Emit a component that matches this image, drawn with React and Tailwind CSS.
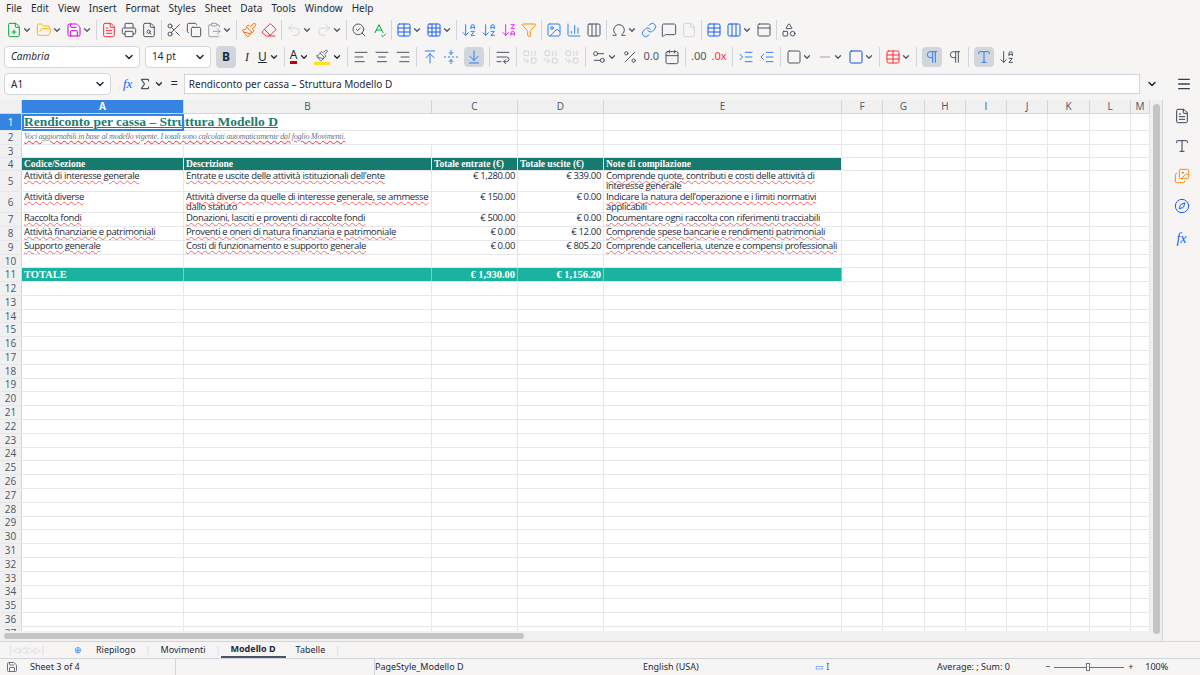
import {
  FilePlus, FolderOpen, Save, FileText, Printer, FileSearch, Scissors, Copy, ClipboardPaste,
  Paintbrush, Eraser, Undo2, Redo2, SearchCheck, SpellCheck, Table, Grid3x3, ArrowDownAZ,
  ArrowDownZA, Filter, Image, BarChart3, Omega, Link, MessageSquare, File, Columns3, PanelTop,
  Shapes, ChevronDown, AlignLeft, AlignCenter, AlignRight, ArrowUpToLine, FoldVertical,
  ArrowDownToLine, WrapText, Combine, Percent, Calendar, IndentIncrease, IndentDecrease,
  Square, Minus, Pilcrow, Menu, Settings2, Type, Images, Compass, Sigma,
} from 'lucide-react';

const ui = { fontFamily: '"Noto Sans", "Open Sans", sans-serif' };
const cellFont = { fontFamily: '"Open Sans", "Noto Sans", sans-serif', letterSpacing: '-0.35px' };
const serif = { fontFamily: '"Liberation Serif", "DejaVu Serif", serif' };

const menus = ['File', 'Edit', 'View', 'Insert', 'Format', 'Styles', 'Sheet', 'Data', 'Tools', 'Window', 'Help'];

const cols = [
  ['A', 162], ['B', 248], ['C', 86], ['D', 86], ['E', 238], ['F', 41], ['G', 42], ['H', 41],
  ['I', 41], ['J', 41], ['K', 42], ['L', 41], ['M', 19],
];

const heights = [21, 21, 14, 14, 14];

const data = [
  ['Attività di interesse generale', 'Entrate e uscite delle attività istituzionali dell\u2019ente', '€ 1,280.00', '€ 339.00', 'Comprende quote, contributi e costi delle attività di interesse generale'],
  ['Attività diverse', 'Attività diverse da quelle di interesse generale, se ammesse dallo statuto', '€ 150.00', '€ 0.00', 'Indicare la natura dell\u2019operazione e i limiti normativi applicabili'],
  ['Raccolta fondi', 'Donazioni, lasciti e proventi di raccolte fondi', '€ 500.00', '€ 0.00', 'Documentare ogni raccolta con riferimenti tracciabili'],
  ['Attività finanziarie e patrimoniali', 'Proventi e oneri di natura finanziaria e patrimoniale', '€ 0.00', '€ 12.00', 'Comprende spese bancarie e rendimenti patrimoniali'],
  ['Supporto generale', 'Costi di funzionamento e supporto generale', '€ 0.00', '€ 805.20', 'Comprende cancelleria, utenze e compensi professionali'],
];

const I = ({ icon: Ic, c = 'text-gray-600', dd }) => (
  <div className="flex items-center">
    <Ic className={`h-4 w-4 ${c}`} strokeWidth={1.5} />
    {dd && <ChevronDown className="h-2.5 w-2.5 text-gray-600" strokeWidth={3} />}
  </div>
);
const Sep = () => <div className="h-5 w-px bg-gray-300" />;

function Cell({ w, children, className = '', style }) {
  return (
    <div className={`shrink-0 overflow-hidden border-r border-gray-200 ${className}`} style={{ width: w, ...style }}>
      {children}
    </div>
  );
}

function Row({ n, h, active, children }) {
  return (
    <div className="flex border-b border-gray-200" style={{ height: h }}>
      <div className={`flex w-[22px] shrink-0 items-center justify-center border-r border-gray-300 text-[10px] ${active ? 'bg-[#3584e4] text-white' : 'bg-[#f0f0f0] text-gray-600'}`} style={{ letterSpacing: 0 }}>{n}</div>
      {children}
    </div>
  );
}

export default function App() {
  const empty = (from) => cols.slice(from).map(([k, w]) => <Cell key={k} w={w} />);
  return (
    <div className="flex h-[675px] w-[1200px] flex-col overflow-hidden bg-[#f6f5f4] text-[10px] text-gray-800" style={ui}>
      <div className="flex h-[17px] items-center gap-[9px] px-1.5 text-[10px]">
        {menus.map((m) => <span key={m}>{m}</span>)}
      </div>
      <div className="flex h-[26px] items-center gap-[4px] px-1.5">
        <I icon={FilePlus} c="text-green-600" dd /><I icon={FolderOpen} c="text-amber-400" dd /><I icon={Save} c="text-fuchsia-600" dd /><Sep />
        <I icon={FileText} c="text-red-500" /><I icon={Printer} /><I icon={FileSearch} /><Sep />
        <I icon={Scissors} /><I icon={Copy} /><I icon={ClipboardPaste} c="text-gray-400" dd /><Sep />
        <I icon={Paintbrush} c="text-orange-500" /><I icon={Eraser} c="text-red-500" /><Sep />
        <I icon={Undo2} c="text-gray-300" dd /><I icon={Redo2} c="text-gray-300" dd /><Sep />
        <I icon={SearchCheck} /><I icon={SpellCheck} c="text-green-600" /><Sep />
        <I icon={Table} c="text-blue-600" dd /><I icon={Grid3x3} c="text-blue-600" dd /><Sep />
        <I icon={ArrowDownAZ} c="text-blue-500" /><I icon={ArrowDownAZ} c="text-blue-500" /><I icon={ArrowDownZA} c="text-fuchsia-500" /><I icon={Filter} c="text-orange-400" /><Sep />
        <I icon={Image} c="text-blue-500" /><I icon={BarChart3} c="text-blue-500" /><I icon={Columns3} /><Sep />
        <I icon={Omega} dd /><I icon={Link} c="text-blue-500" /><I icon={MessageSquare} /><I icon={File} c="text-gray-300" /><Sep />
        <I icon={Table} c="text-blue-600" /><I icon={Columns3} c="text-blue-600" dd /><I icon={PanelTop} /><Sep />
        <I icon={Shapes} />
      </div>
      <div className="flex h-[27px] items-center gap-[5px] px-1">
        <div className="flex h-[22px] w-[136px] items-center justify-between rounded border border-gray-300 bg-white pl-1.5 pr-1 text-[10px] italic">Cambria<ChevronDown className="h-3 w-3" strokeWidth={3} /></div>
        <div className="flex h-[22px] w-[66px] items-center justify-between rounded border border-gray-300 bg-white pl-1.5 pr-1 text-[10px]">14 pt<ChevronDown className="h-3 w-3" strokeWidth={3} /></div>
        <div className="flex h-[22px] w-[20px] items-center justify-center rounded bg-gray-300 text-[12px] font-bold">B</div>
        <span className="px-1 text-[12px] italic" style={serif}>I</span>
        <div className="flex items-center"><span className="text-[12px] underline">U</span><ChevronDown className="ml-0.5 h-2.5 w-2.5" strokeWidth={3} /></div><Sep />
        <div className="flex items-center"><span className="border-b-[3px] border-red-700 text-[12px] leading-none">A</span><ChevronDown className="ml-0.5 h-2.5 w-2.5" strokeWidth={3} /></div>
        <div className="flex items-center"><Paintbrush className="h-4 w-4 border-b-[3px] border-yellow-300 text-gray-600" strokeWidth={1.5} /><ChevronDown className="ml-0.5 h-2.5 w-2.5" strokeWidth={3} /></div><Sep />
        <I icon={AlignLeft} /><I icon={AlignCenter} /><I icon={AlignRight} /><Sep />
        <I icon={ArrowUpToLine} c="text-blue-500" /><I icon={FoldVertical} c="text-blue-500" />
        <div className="rounded bg-gray-300 p-0.5"><ArrowDownToLine className="h-4 w-4 text-blue-500" strokeWidth={1.5} /></div><Sep />
        <I icon={WrapText} /><Sep />
        <I icon={Combine} c="text-gray-300" /><I icon={Combine} c="text-gray-300" /><I icon={Combine} c="text-gray-300" /><Sep />
        <I icon={Settings2} dd /><I icon={Percent} /><span className="text-[11px] text-gray-600">0.0</span><I icon={Calendar} /><Sep />
        <span className="text-[11px] text-gray-600">.00</span><span className="text-[11px] text-red-500">.0x</span><Sep />
        <I icon={IndentIncrease} c="text-blue-500" /><I icon={IndentDecrease} c="text-blue-500" /><Sep />
        <I icon={Square} dd /><I icon={Minus} c="text-gray-400" dd /><I icon={Square} c="text-blue-700" dd /><Sep />
        <I icon={Table} c="text-red-500" dd /><Sep />
        <div className="rounded bg-gray-300 p-0.5"><Pilcrow className="h-4 w-4 text-blue-500" strokeWidth={1.5} /></div><I icon={Pilcrow} /><Sep />
        <div className="rounded bg-gray-300 p-0.5"><Type className="h-4 w-4 text-blue-500" strokeWidth={1.5} /></div><I icon={ArrowDownAZ} />
      </div>
      <div className="flex h-[26px] items-center gap-1.5 px-1 pt-0.5">
        <div className="flex h-[22px] w-[107px] items-center justify-between rounded border border-gray-300 bg-white pl-1.5 pr-1">A1<ChevronDown className="h-3 w-3" strokeWidth={3} /></div>
        <span className="ml-1.5 text-[13px] italic text-blue-600" style={serif}>fx</span>
        <Sigma className="h-3.5 w-3.5 text-gray-600" /><ChevronDown className="-ml-1 h-2.5 w-2.5" strokeWidth={3} />
        <span className="text-[13px]">=</span>
        <div className="flex h-[20px] flex-1 items-center border border-gray-300 bg-white px-1">Rendiconto per cassa – Struttura Modello D</div>
        <ChevronDown className="h-3 w-3" strokeWidth={3} />
        <Menu className="ml-3 mr-1 h-4 w-4 text-gray-700" />
      </div>
      <div className="flex flex-1 overflow-hidden pt-1">
        <div className="flex w-[1150px] flex-col bg-white" style={cellFont}>
          <div className="flex h-[14px] shrink-0 border-b border-gray-300 bg-[#f0f0f0] text-[10px] text-gray-600" style={{ letterSpacing: 0 }}>
            <div className="w-[22px] shrink-0 border-r border-gray-300" />
            {cols.map(([k, w], i) => (
              <div key={k} className={`flex shrink-0 items-center justify-center border-r border-gray-300 ${i === 0 ? 'bg-[#3584e4] font-bold text-white' : ''}`} style={{ width: w }}>{k}</div>
            ))}
          </div>
          <div className="flex-1 overflow-hidden text-[9.5px]">
            <Row n={1} h={17} active>
              <div className="relative flex shrink-0 items-center whitespace-nowrap text-[13.5px] font-bold text-[#1d7d70] underline" style={{ width: 410, ...serif, letterSpacing: 0 }}>
                <span className="pl-0.5">Rendiconto per cassa – Struttura Modello D</span>
                <div className="absolute left-0 top-0 h-[17px] w-[162px] border-2 border-[#3584e4]" />
              </div>
              {empty(2)}
            </Row>
            <Row n={2} h={14}>
              <div className="shrink-0 whitespace-nowrap pl-0.5 text-[8px] italic text-gray-500 underline decoration-red-500 decoration-wavy" style={{ width: 410, ...serif, letterSpacing: '-0.2px' }}>Voci aggiornabili in base al modello vigente. I totali sono calcolati automaticamente dal foglio Movimenti.</div>
              {empty(2)}
            </Row>
            <Row n={3} h={13}>{empty(0)}</Row>
            <Row n={4} h={13}>
              {['Codice/Sezione', 'Descrizione', 'Totale entrate (€)', 'Totale uscite (€)', 'Note di compilazione'].map((t, i) => (
                <Cell key={t} w={cols[i][1]} className="whitespace-nowrap bg-[#167a6e] pl-0.5 text-[9.5px] font-bold leading-[13px] text-white" style={{ ...serif, letterSpacing: 0 }}>{t}</Cell>
              ))}
              {empty(5)}
            </Row>
            {data.map((r, ri) => (
              <Row key={ri} n={ri + 5} h={heights[ri]}>
                {r.map((t, i) => (
                  <Cell key={i} w={cols[i][1]} className={`leading-[10px] ${i === 2 || i === 3 ? 'pr-0.5 text-right' : 'pl-0.5'} ${i < 2 || i === 4 ? 'underline decoration-red-400 decoration-wavy decoration-1' : ''}`}>{t}</Cell>
                ))}
                {empty(5)}
              </Row>
            ))}
            <Row n={10} h={13}>{empty(0)}</Row>
            <Row n={11} h={14}>
              {['TOTALE', '', '€ 1,930.00', '€ 1,156.20', ''].map((t, i) => (
                <Cell key={i} w={cols[i][1]} className={`border-white/40 bg-[#1ab3a0] text-[10.5px] font-bold leading-[14px] text-white ${i > 1 && i < 4 ? 'pr-0.5 text-right' : 'pl-0.5'}`} style={{ ...serif, letterSpacing: 0 }}>{t}</Cell>
              ))}
              {empty(5)}
            </Row>
            {Array.from({ length: 26 }, (_, i) => (
              <Row key={i} n={i + 12} h={13.8}>{empty(0)}</Row>
            ))}
          </div>
          <div className="flex h-[10px] shrink-0 items-center bg-[#f0f0f0] px-1">
            <div className="h-[6px] w-[520px] rounded bg-[#c4c4c4]" />
          </div>
        </div>
        <div className="flex w-[12px] flex-col items-center bg-[#f0f0f0]">
          <div className="mt-1 h-[530px] w-[7px] rounded bg-[#c4c4c4]" />
        </div>
        <div className="flex flex-1 flex-col items-center gap-3.5 border-l border-gray-300 pt-2">
          <FileText className="h-4 w-4 text-gray-700" strokeWidth={1.5} />
          <Type className="h-4 w-4 text-gray-700" strokeWidth={1.5} />
          <Images className="h-4 w-4 text-orange-400" strokeWidth={1.5} />
          <Compass className="h-4 w-4 text-blue-600" strokeWidth={1.5} />
          <span className="text-[14px] italic text-blue-600" style={serif}>fx</span>
        </div>
      </div>
      <div className="flex h-[17px] items-center border-t border-gray-300 text-[9px]">
        <div className="w-[70px] pl-2 tracking-tighter text-gray-300">|◁◁ ▷▷|</div>
        <div className="flex items-center px-1"><span className="text-blue-500">⊕</span></div>
        <span className="px-2.5">Riepilogo</span><span className="text-gray-300">|</span>
        <span className="px-2.5">Movimenti</span><span className="text-gray-300">|</span>
        <span className="border-b-2 border-gray-600 px-2.5 font-bold">Modello D</span>
        <span className="px-2.5">Tabelle</span><span className="text-gray-300">|</span>
      </div>
      <div className="flex h-[17px] items-center border-t border-gray-300 text-[9px]">
        <Save className="ml-1.5 h-3 w-3 text-gray-500" />
        <span className="ml-3 w-[145px]">Sheet 3 of 4</span>
        <div className="h-full w-[200px] border-x border-gray-300" />
        <span className="w-[200px]">PageStyle_Modello D</span>
        <span className="w-[160px] pl-[68px]">English (USA)</span>
        <span className="w-[180px] pl-[80px] text-blue-500">▭ <span className="text-gray-600">I</span></span>
        <span className="w-[130px] pl-[22px]">Average: ; Sum: 0</span>
        <div className="flex items-center gap-1">
          <span>−</span><div className="relative h-px w-[70px] bg-gray-500"><div className="absolute left-[32px] -top-1 h-2 w-1 border border-gray-500 bg-white" /></div><span>+</span>
        </div>
        <span className="ml-3">100%</span>
      </div>
    </div>
  );
}
